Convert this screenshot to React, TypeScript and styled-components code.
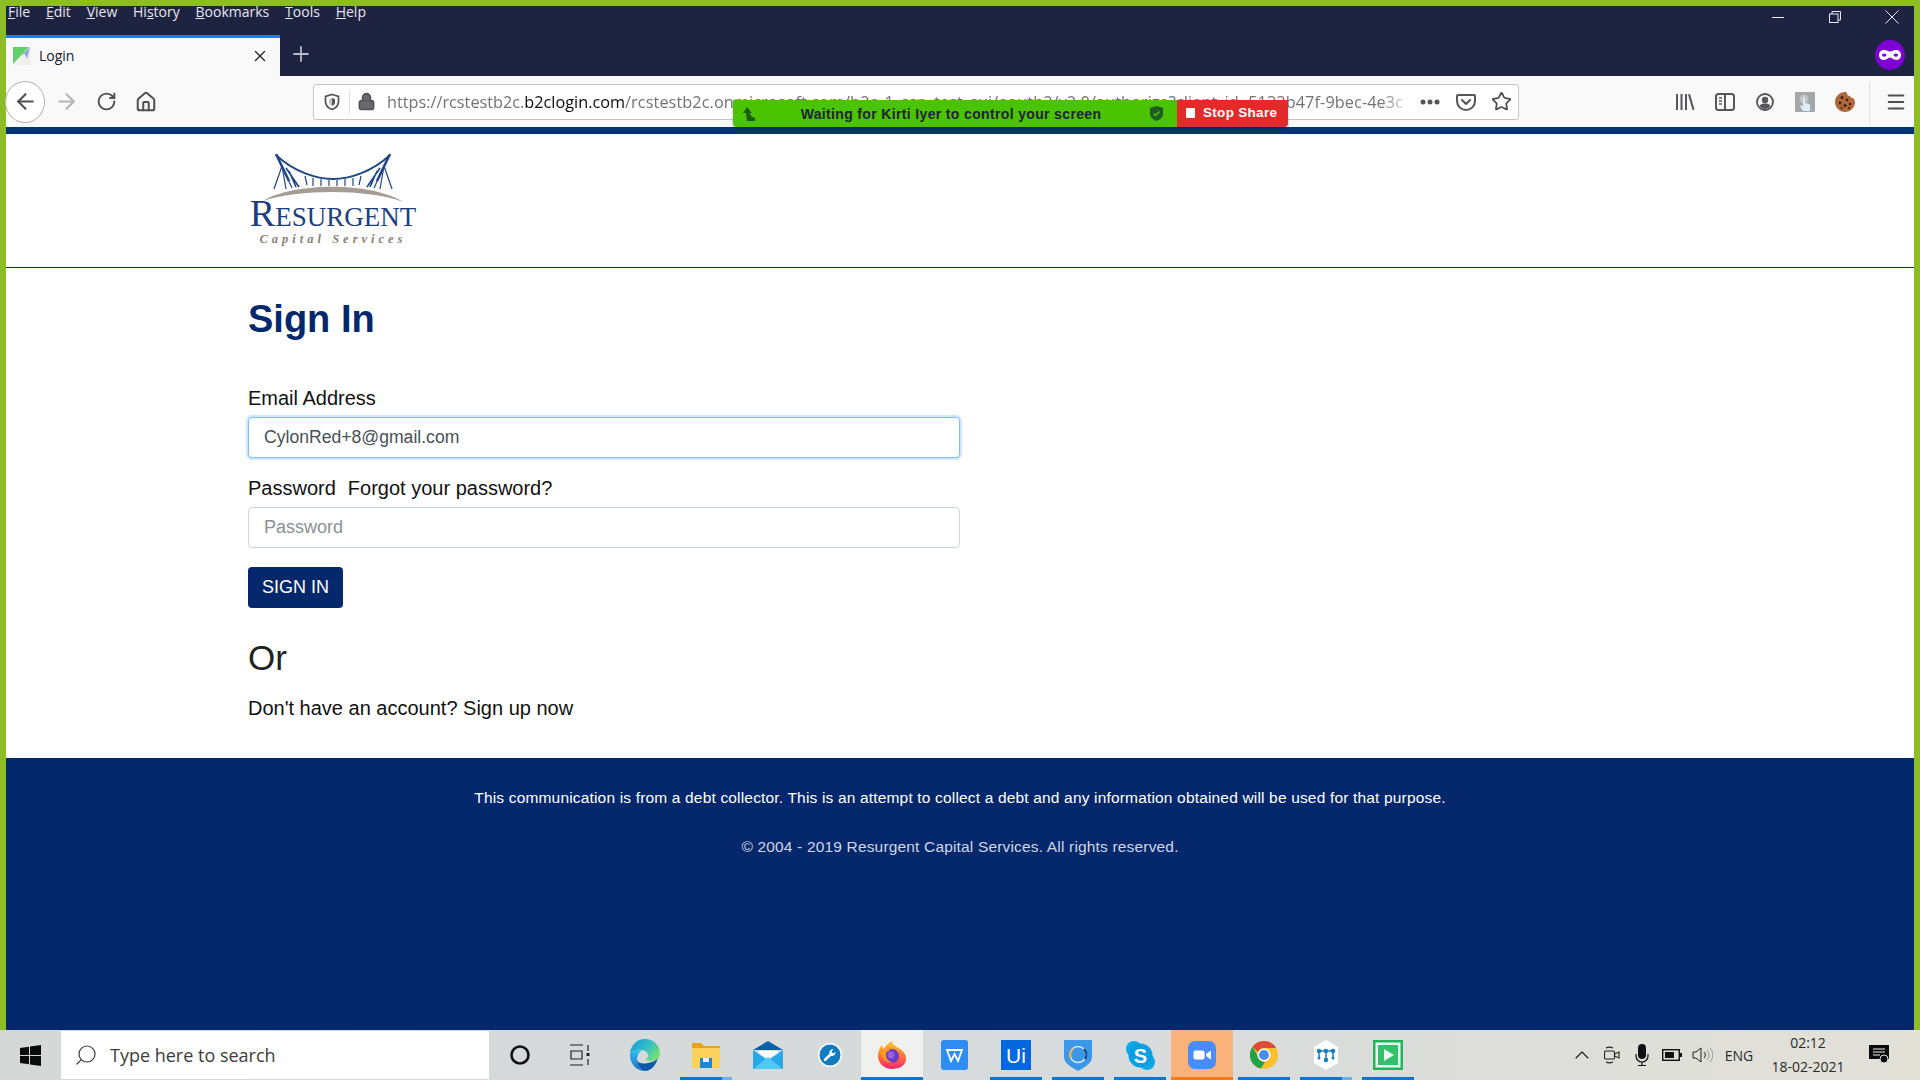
import styled, { createGlobalStyle } from 'styled-components';
import {
  ArrowLeft,
  ArrowRight,
  RotateCw,
  House,
  Lock,
  Star,
  X,
  Plus,
  Search,
  ChevronUp,
  Menu,
} from 'lucide-react';
import type { ReactNode } from 'react';

const GlobalStyle = createGlobalStyle`
  html, body { margin: 0; padding: 0; height: 100%; overflow: hidden; }
  body { font-family: "Liberation Sans", Arial, sans-serif; background: #fff; }
  * { box-sizing: border-box; }
`;

const Screen = styled.div`
  position: relative;
  width: 1920px;
  height: 1080px;
  display: flex;
  flex-direction: column;
`;

const Framed = styled.div`
  height: 1030px;
  border: solid #8cbd24;
  border-width: 6px 6px 0;
  display: flex;
  flex-direction: column;
`;

/* browser chrome */
const TitleRow = styled.div`
  height: 28px;
  background: #1f2342;
  display: flex;
  justify-content: space-between;
`;

const MenuBar = styled.div`
  display: flex;
  gap: 15.8px;
  padding-left: 2px;
  height: 13px;
  align-items: center;
  margin-top: -1px;
  font: 14px/20px 'Open Sans', sans-serif;
  color: #e4e6ee;
`;

const WindowButtons = styled.div`
  display: flex;
  gap: 13px;
  color: #e8e8ee;
`;

const WindowButton = styled.div`
  width: 44px;
  height: 22px;
  display: flex;
  align-items: center;
  justify-content: center;
`;

const TabRow = styled.div`
  height: 42px;
  background: #1f2342;
  display: flex;
  align-items: flex-end;
`;

const Tab = styled.div`
  width: 274px;
  height: 41px;
  background: #f9f9fa;
  border-top: 3px solid #0a84ff;
  display: flex;
  align-items: center;
  padding: 0 0 3px 7px;
  font: 14px 'Open Sans', sans-serif;
  color: #18181f;
`;

const TabTitle = styled.span`
  margin-left: 8px;
  flex: 1;
`;

const NewTab = styled.div`
  width: 42px;
  height: 41px;
  padding-bottom: 4px;
  display: flex;
  align-items: center;
  justify-content: center;
  color: #b9bac6;
`;

const Incognito = styled.div`
  width: 30px;
  height: 30px;
  border-radius: 50%;
  background: #7f00d4;
  margin: 0 9px 6px auto;
  display: flex;
  align-items: center;
  justify-content: center;
`;

const NavRow = styled.div`
  height: 51px;
  background: #f9f9fa;
  display: flex;
  align-items: center;
  color: #4f4f52;
`;

const Slot = styled.div<{ $w: number; $faded?: boolean }>`
  width: ${(p) => p.$w}px;
  height: 36px;
  flex: none;
  display: flex;
  align-items: center;
  justify-content: center;
  color: ${(p) => (p.$faded ? '#b5b5b8' : 'inherit')};
`;

const BackCircle = styled.div`
  width: 40px;
  height: 42px;
  flex: none;
  margin: 0 1px 0 -1px;
  border: 1px solid #b4b4b6;
  border-radius: 50%;
  background: #fff;
  display: flex;
  align-items: center;
  justify-content: center;
`;

const UrlBar = styled.div`
  width: 1206px;
  height: 36px;
  margin-left: 147px;
  flex: none;
  background: #fff;
  border: 1px solid #c4c4c6;
  border-radius: 3px;
  display: flex;
  align-items: center;
`;

const UrlDivider = styled.div`
  width: 1px;
  height: 24px;
  background: #e2e2e4;
`;

const UrlText = styled.div`
  flex: 1;
  min-width: 0;
  overflow: hidden;
  white-space: nowrap;
  margin-left: 5px;
  font: 16.25px 'Open Sans', sans-serif;
  color: #737377;
  -webkit-mask-image: linear-gradient(to right, #000 97%, transparent);
  mask-image: linear-gradient(to right, #000 97%, transparent);
`;

const UrlHost = styled.span`
  color: #0c0c0d;
`;

const UrlPath = styled.span`
  letter-spacing: 0.09px;
`;

const ToolGroup = styled.div`
  margin-left: 146px;
  display: flex;
  align-items: center;
`;

const ToolDivider = styled.div`
  width: 1px;
  height: 40px;
  margin: 0 8px 0 4px;
  background: #e0e0e2;
`;

const BrowserAccent = styled.div`
  height: 7px;
  background: #003575;
`;

/* zoom sharing strip */
const ShareBar = styled.div`
  position: absolute;
  left: 733px;
  top: 100px;
  width: 555px;
  height: 27px;
  display: flex;
  border-radius: 0 0 4px 4px;
  overflow: hidden;
  box-shadow: 0 1px 3px rgba(0, 0, 0, 0.3);
`;

const ShareStatus = styled.div`
  width: 444px;
  background: #4ac400;
  color: #22223a;
  display: flex;
  align-items: center;
  padding: 0 14px 0 9px;
  font: bold 14px 'Liberation Sans', sans-serif;
`;

const ShareText = styled.span`
  flex: 1;
  text-align: center;
  padding-right: 4px;
  letter-spacing: 0.35px;
`;

const StopShare = styled.div`
  flex: 1;
  background: #e22a2a;
  color: #fff;
  display: flex;
  align-items: center;
  gap: 8px;
  padding: 0 0 2px 9px;
  font: bold 13.5px 'Liberation Sans', sans-serif;
  letter-spacing: 0.3px;
`;

const StopSquare = styled.span`
  width: 9px;
  height: 10px;
  background: #fff;
  border-radius: 1px;
`;

/* login page */
const Page = styled.div`
  flex: 1;
  min-height: 0;
  display: flex;
  flex-direction: column;
  background: #fff;
`;

const Header = styled.header`
  height: 134px;
  padding: 20px 0 0 243px;
  border-bottom: 1px solid #04286b;
`;

const LogoBox = styled.div`
  width: 168px;
  display: flex;
  flex-direction: column;
  align-items: center;
`;

const LogoBridge = styled.svg`
  display: block;
  margin-bottom: -8px;
`;

const LogoName = styled.div`
  font: 38px/27px 'Liberation Serif', serif;
  font-variant: small-caps;
  color: #1d3f7d;
  white-space: nowrap;
`;

const LogoTag = styled.div`
  margin-top: 5px;
  font: italic bold 12.5px/14px 'Liberation Serif', serif;
  color: #8b8178;
  letter-spacing: 4px;
  white-space: nowrap;
`;

const Main = styled.main`
  flex: 1;
  padding: 29px 0 0 242px;
  color: #111;
`;

const Title = styled.h1`
  margin: 0 0 45px;
  font: bold 38px/44px 'Liberation Sans', sans-serif;
  color: #04286b;
`;

const Field = styled.div`
  width: 712px;
  margin-bottom: 18px;
`;

const Label = styled.div`
  display: flex;
  gap: 12px;
  font-size: 20px;
  line-height: 24px;
  margin-bottom: 7px;
  color: #111;
`;

const Input = styled.div<{ $focused?: boolean; $empty?: boolean }>`
  height: 41px;
  display: flex;
  align-items: center;
  padding: 0 15px;
  border-radius: 4px;
  background: #fff;
  font-size: ${(p) => (p.$empty ? '18px' : '17.6px')};
  border: 1px solid ${(p) => (p.$focused ? '#80bdff' : '#ced4da')};
  color: ${(p) => (p.$empty ? '#8a9097' : '#495057')};
  box-shadow: ${(p) => (p.$focused ? '0 0 0 2px rgba(0, 123, 255, 0.18)' : 'none')};
`;

const SubmitButton = styled.button`
  display: block;
  width: 95px;
  height: 41px;
  margin: 19px 0 30px;
  padding: 0;
  border: 0;
  border-radius: 4px;
  background: #04286b;
  color: #fff;
  font: 18px 'Liberation Sans', sans-serif;
`;

const OrHeading = styled.h2`
  margin: 0 0 18px;
  font: 400 35px/40px 'Liberation Sans', sans-serif;
  color: #222;
`;

const SignUpLine = styled.div`
  font-size: 20px;
  line-height: 24px;
`;

const Footer = styled.footer`
  height: 272px;
  background: #04286b;
  padding-top: 30px;
  text-align: center;
  font-size: 15.5px;
  letter-spacing: 0.17px;
`;

const Notice = styled.p`
  margin: 0 0 30px;
  line-height: 20px;
  color: #fff;
`;

const Copyright = styled.p`
  margin: 0;
  line-height: 18px;
  color: #cfd6e6;
`;

/* windows taskbar */
const Taskbar = styled.div`
  height: 50px;
  display: flex;
  align-items: stretch;
  background: linear-gradient(to right, #d5d8d7, #d8dbdc 60%, #e2e1d8);
  color: #1b1b1b;
`;

const StartButton = styled.div`
  width: 61px;
  display: flex;
  align-items: center;
  justify-content: center;
`;

const SearchBox = styled.div`
  width: 428px;
  margin: 1px 0;
  background: #fff;
  display: flex;
  align-items: center;
  gap: 12px;
  padding-left: 13px;
  font: 18px 'Open Sans', sans-serif;
  color: #3c3c3c;
`;

const MirroredSearch = styled(Search)`
  transform: scaleX(-1);
`;

const TaskSlots = styled.div`
  display: grid;
  grid-template-columns: repeat(15, 62px);
`;

const TaskSlot = styled.div<{ $mark?: 'open' | 'multi' | 'active' | 'alert' }>`
  position: relative;
  display: flex;
  align-items: center;
  justify-content: center;
  background: ${(p) =>
    p.$mark === 'active' ? '#f0f0ef' : p.$mark === 'alert' ? '#f8b27a' : 'transparent'};

  &::after {
    content: '';
    display: ${(p) => (p.$mark ? 'block' : 'none')};
    position: absolute;
    bottom: 0;
    height: 3px;
    left: ${(p) => (p.$mark === 'active' || p.$mark === 'alert' ? 0 : '5px')};
    right: ${(p) => (p.$mark === 'active' || p.$mark === 'alert' ? 0 : '5px')};
    background: ${(p) =>
      p.$mark === 'alert'
        ? '#ff7a14'
        : p.$mark === 'multi'
          ? 'linear-gradient(to right, #0078d7 80%, #6cb2ea 80%)'
          : '#0078d7'};
  }
`;

const Tray = styled.div`
  margin-left: auto;
  padding-right: 17px;
  display: flex;
  align-items: center;
`;

const TrayItem = styled.div<{ $w: number }>`
  width: ${(p) => p.$w}px;
  display: flex;
  align-items: center;
  justify-content: center;
`;

const Lang = styled.span`
  font: 14px 'Open Sans', sans-serif;
  color: #2a2a2a;
`;

const Clock = styled.div`
  text-align: center;
  font: 14px/24px 'Open Sans', sans-serif;
  color: #2a2a2a;
`;

const menuItems: ReactNode[] = [
  <><u>F</u>ile</>,
  <><u>E</u>dit</>,
  <><u>V</u>iew</>,
  <>Hi<u>s</u>tory</>,
  <><u>B</u>ookmarks</>,
  <><u>T</u>ools</>,
  <><u>H</u>elp</>,
];

function Favicon() {
  return (
    <svg width="18" height="18" viewBox="0 0 18 18">
      <rect width="18" height="18" fill="#f1f0ec" />
      <path d="M0 0h16L0 17z" fill="#5fd168" />
      <path d="M9 8l8-8-3 12-2-5z" fill="#8f9ede" />
    </svg>
  );
}

function Mask() {
  return (
    <svg width="22" height="12" viewBox="0 0 22 12">
      <path
        fillRule="evenodd"
        fill="#fff"
        d="M5 1c3 0 4 1.500 6 1.500S14 1 17 1c3 0 5 2 5 5s-2 5-5 5c-3 0-4-2.500-6-2.500S8 11 5 11C2 11 0 9 0 6s2-5 5-5zM5 4.500a2 1.600 0 100 3.200 2.500 1.600 0 000-3.200zM17 4.500a2.500 1.600 0 100 3.200 2 1.600 0 000-3.200z"
      />
    </svg>
  );
}

function TrackingShield() {
  return (
    <svg width="18" height="18" viewBox="0 0 18 18" fill="none">
      <path d="M9 1.500l6.500 2v5c0 4-2.500 6.500-6.500 8-4-1.500-6.500-4-6.500-8v-5z" stroke="#55555a" strokeWidth="1.800" />
      <path d="M9 5l3 1v3c0 2-1 3-3 4z" fill="#55555a" />
      <path d="M9 5L6 6v3c0 2 1 3 3 4z" fill="#55555a" opacity=".35" />
    </svg>
  );
}

function Pocket() {
  return (
    <svg width="20" height="18" viewBox="0 0 20 18" fill="none" stroke="#55555a" strokeWidth="2">
      <path d="M2 2h16a1 1 0 011 1v5c0 5-4 9-9 9s-9-4-9-9V3a1 1 0 011-1z" />
      <path d="M6 7l4 4 4-4" strokeLinecap="round" strokeLinejoin="round" />
    </svg>
  );
}

function Library() {
  return (
    <svg width="20" height="18" viewBox="0 0 20 18" fill="#55555a">
      <rect x="1" y="1" width="2" height="16" />
      <rect x="5.500" y="1" width="2" height="16" />
      <rect x="10" y="1" width="2" height="16" />
      <path d="M13 1.500l2-.5 4.500 15.500-2 .5z" />
    </svg>
  );
}

function Sidebar() {
  return (
    <svg width="20" height="18" viewBox="0 0 20 18" fill="none" stroke="#55555a" strokeWidth="2">
      <rect x="1" y="1" width="18" height="16" rx="2.500" />
      <path d="M10 1v16" />
      <path d="M4 5h3M4 8h3M4 11h3" strokeWidth="1.300" />
    </svg>
  );
}

function Account() {
  return (
    <svg width="18" height="18" viewBox="0 0 18 18" fill="none">
      <circle cx="9" cy="9" r="8" stroke="#55555a" strokeWidth="1.800" />
      <circle cx="9" cy="7" r="3.200" fill="#55555a" />
      <path d="M3.500 13c1-2 3-2.500 5.500-2.500s4.500.5 5.500 2.500c-1.500 2-3.500 3-5.500 3s-4-1-5.500-3z" fill="#55555a" />
    </svg>
  );
}

function TouchExtension() {
  return (
    <svg width="20" height="20" viewBox="0 0 20 20">
      <rect width="20" height="20" rx="1" fill="#a5a6a8" />
      <circle cx="9" cy="7" r="4.500" fill="#c2c3c5" />
      <path d="M8 6a1 1 0 012 0v5l5 1.500V19H8l-3-5 1-1 2 1.500z" fill="#dcefFb" />
    </svg>
  );
}

function Cookie() {
  return (
    <svg width="20" height="20" viewBox="0 0 20 20">
      <path d="M10 0c1 0 1.500.5 2 1 0 2 1 3 3 3 .5 1.500 1.500 2 3 2 1 1 2 2.500 2 4 0 5.500-4.500 10-10 10S0 15.500 0 10 4.500 0 10 0z" fill="#b0683a" />
      <g fill="#3a2012">
        <circle cx="7" cy="5.500" r="1.500" />
        <circle cx="12" cy="8" r="1.300" />
        <circle cx="5" cy="11" r="1.400" />
        <circle cx="10" cy="13.500" r="1.500" />
        <circle cx="15" cy="12" r="1.200" />
        <circle cx="6.500" cy="16" r="1" />
        <circle cx="14" cy="16" r="1" />
      </g>
    </svg>
  );
}

function MinimizeIcon() {
  return (
    <svg width="12" height="12" viewBox="0 0 12 12" fill="none" stroke="#e8e8ee">
      <path d="M0 6.500h12" />
    </svg>
  );
}

function RestoreIcon() {
  return (
    <svg width="12" height="12" viewBox="0 0 12 12" fill="none" stroke="#e8e8ee">
      <rect x=".5" y="3" width="8.500" height="8.500" />
      <path d="M3 3V.5h8.500V9H9" />
    </svg>
  );
}

function CloseIcon() {
  return (
    <svg width="14" height="14" viewBox="0 0 14 14" fill="none" stroke="#e8e8ee">
      <path d="M.5.500l13 13M13.500.500l-13 13" />
    </svg>
  );
}

function BridgeLogo() {
  return (
    <LogoBridge width="168" height="54" viewBox="0 0 168 54" fill="none">
      <g stroke="#1f4584" strokeWidth="1.200">
        <path d="M27 0L40 27M141 0l-13 27" strokeWidth="2.500" />
        <path d="M33 12L25 35M33 12l4 23M33 12l10 22M135 12l8 23M135 12l-4 23M135 12l-10 22" />
        <path d="M37 14l13 19M40 17l7 16M131 14l-13 19M128 17l-7 16" strokeWidth="1.600" />
        <path d="M27 1C45 18 68 25 84 25s39-7 57-24" strokeWidth="1.800" />
        <path d="M56 22l2 9M64 24v8M72 25v7M80 26v6M88 26v6M96 25v7M104 24v8M112 22l-2 9" />
      </g>
      <path d="M14 47C45 28 123 28 154 48 120 35 50 35 14 47z" fill="#a59c93" />
    </LogoBridge>
  );
}

function WindowsLogo() {
  return (
    <svg width="21" height="21" viewBox="0 0 21 21" fill="#0c0c0c">
      <path d="M0 3l9-1.300V10H0zM10 1.500L21 0v10H10zM0 11h9v8.300L0 18zM10 11h11v10l-11-1.500z" />
    </svg>
  );
}

function TaskView() {
  return (
    <svg width="24" height="24" viewBox="0 0 24 24" fill="none" stroke="#222" strokeWidth="1.200">
      <path d="M0 2h13M0 22h13M1 8h11v8H1z" />
      <path d="M18 2v6M18 16v6" />
      <rect x="16.500" y="10" width="3" height="3" fill="#222" stroke="none" />
    </svg>
  );
}

function EdgeIcon() {
  return (
    <svg width="31" height="32" viewBox="0 0 31 32">
      <defs>
        <linearGradient id="edgeTop" x1="0" y1="0" x2="1" y2=".6">
          <stop offset="0" stopColor="#1696d8" />
          <stop offset=".6" stopColor="#35c1c4" />
          <stop offset="1" stopColor="#74de72" />
        </linearGradient>
        <linearGradient id="edgeLow" x1="0" y1="0" x2="0" y2="1">
          <stop offset="0" stopColor="#35c1f1" />
          <stop offset="1" stopColor="#1472c9" />
        </linearGradient>
      </defs>
      <path d="M1 14C2 6 8 0 16 0c9 0 15 7 15 14 0 5-4 8-9 8-3 0-5-1-5-2 2-1 3-3 2-5-2-4-7-5-11-4-3 1-6 2-7 3z" fill="url(#edgeTop)" />
      <path d="M1 14c4-4 9-4 12-3-3 2-5 6-5 10 0 5 3 9 8 11C7 32 0 24 1 14z" fill="url(#edgeLow)" />
      <path d="M8 21c2 4 6 4 11 3 4-1 8-2 10-5-2 7-7 13-13 13-5-2-8-6-8-11z" fill="#0d5aa8" />
    </svg>
  );
}

function ExplorerIcon() {
  return (
    <svg width="30" height="28" viewBox="0 0 30 28">
      <path d="M1 2h9l3 3h16v3H1z" fill="#e8a317" />
      <rect x="1" y="7" width="28" height="20" fill="#fdd25a" />
      <rect x="9" y="17" width="12" height="10" fill="#1c88d4" />
      <rect x="12" y="17" width="6" height="4" fill="#e8f3fb" />
    </svg>
  );
}

function MailIcon() {
  return (
    <svg width="30" height="28" viewBox="0 0 30 28">
      <path d="M0 9L15 0l15 9z" fill="#0b5ea8" />
      <path d="M5 10h20v8H5z" fill="#fff" />
      <path d="M0 9l15 10L30 9v19H0z" fill="#28a8ea" />
      <path d="M0 28l15-12 15 12z" fill="#50c8f5" />
    </svg>
  );
}

function WrenchIcon() {
  return (
    <svg width="24" height="24" viewBox="0 0 24 24">
      <circle cx="12" cy="12" r="12" fill="#fff" />
      <circle cx="12" cy="12" r="10.500" fill="#0f7bc0" />
      <path d="M5.500 16.500l6-6c-.5-2 1-4.500 4-4.500l-2 2.500 1.500 2 2.500-1.500c.2 2.500-2 4.500-4.500 4l-6 5.500z" fill="#fff" />
    </svg>
  );
}

function FirefoxIcon() {
  return (
    <svg width="28" height="30" viewBox="0 0 28 30">
      <defs>
        <linearGradient id="foxBody" x1="0" y1="0" x2="0" y2="1">
          <stop offset="0" stopColor="#ffcb2f" />
          <stop offset=".5" stopColor="#ff7a2b" />
          <stop offset="1" stopColor="#f0267a" />
        </linearGradient>
      </defs>
      <path d="M14 29C6 29 0 23 0 16 0 11 2 7 4 5c0 2 1 3 2 4 1-3 4-6 8-8 0 3 2 4 5 6 5 3 9 6 9 12 0 6-6 10-14 10z" fill="url(#foxBody)" />
      <circle cx="14" cy="16" r="7" fill="#6b3bc4" />
      <circle cx="13" cy="15" r="3.500" fill="#9a5fe0" />
      <path d="M3 11c3-2 7-2 9 0-3 0-4 1-4 4 0 4 3 7 7 7-6 2-11-2-12-11z" fill="#ff9a1f" />
    </svg>
  );
}

function WpsIcon() {
  return (
    <svg width="27" height="30" viewBox="0 0 27 30">
      <rect width="27" height="30" rx="3" fill="#2f8cf2" />
      <path d="M6 10h15l-4 11-3.500-7-3.500 7z" fill="none" stroke="#fff" strokeWidth="1.800" />
    </svg>
  );
}

function UiPathIcon() {
  return (
    <svg width="30" height="30" viewBox="0 0 30 30">
      <rect width="30" height="30" fill="#0067df" />
      <text x="15" y="23" textAnchor="middle" fontFamily="Liberation Sans" fontSize="21" fill="#fff">Ui</text>
    </svg>
  );
}

function HotspotIcon() {
  return (
    <svg width="28" height="31" viewBox="0 0 28 31" fill="none">
      <path d="M0 0h28v17c0 6-7 10-14 14C7 27 0 23 0 17z" fill="#3c97e8" />
      <circle cx="14" cy="14.500" r="8" stroke="#d6eefb" strokeWidth="1.400" />
      <path d="M7 18a8 8 0 012-9" stroke="#f3b13c" strokeWidth="2" />
      <path d="M20 9a8 8 0 011 10" stroke="#103f75" strokeWidth="2" />
    </svg>
  );
}

function SkypeIcon() {
  return (
    <svg width="29" height="29" viewBox="0 0 29 29">
      <circle cx="8" cy="8" r="8" fill="#0fa7e8" />
      <circle cx="21" cy="21" r="8" fill="#0fa7e8" />
      <circle cx="14.500" cy="14.500" r="12" fill="#0a9fe2" />
      <text x="14.500" y="21.500" textAnchor="middle" fontFamily="Liberation Sans" fontWeight="bold" fontSize="20" fill="#fff">S</text>
    </svg>
  );
}

function ZoomIcon() {
  return (
    <svg width="28" height="28" viewBox="0 0 28 28">
      <rect width="28" height="28" rx="7" fill="#4a8cff" />
      <rect x="5.500" y="9.500" width="11" height="9" rx="2" fill="#fff" />
      <path d="M18 13l5-3.500v9L18 15z" fill="#fff" />
    </svg>
  );
}

function ChromeIcon() {
  return (
    <svg width="28" height="28" viewBox="0 0 28 28">
      <circle cx="14" cy="14" r="14" fill="#fbc02d" />
      <path d="M14 0a14 14 0 0112.100 7H14a7 7 0 00-6.300 4L2.500 5.800A14 14 0 0114 0z" fill="#df4a38" />
      <path d="M2.500 5.800l5.600 9.700a7 7 0 006.900 5.400L10.800 27.600A14 14 0 012.500 5.800z" fill="#22a34a" />
      <circle cx="14" cy="14" r="6.500" fill="#fff" />
      <circle cx="14" cy="14" r="5" fill="#4a8cf0" />
    </svg>
  );
}

function FlowHexIcon() {
  return (
    <svg width="28" height="30" viewBox="0 0 28 30">
      <path d="M14 0l12 7v16l-12 7-12-7V7z" fill="#fff" />
      <g stroke="#1b7ec2" strokeWidth="1.500">
        <path d="M7 11h14M14 11v9M7 11v7M21 11v7" />
      </g>
      <g fill="#1b7ec2">
        <circle cx="7" cy="11" r="2.300" />
        <circle cx="14" cy="11" r="2.300" />
        <circle cx="21" cy="11" r="2.300" />
        <circle cx="14" cy="20" r="2.300" />
        <circle cx="7" cy="18" r="1.500" />
        <circle cx="21" cy="18" r="1.500" />
      </g>
    </svg>
  );
}

function PlayerIcon() {
  return (
    <svg width="30" height="30" viewBox="0 0 30 30">
      <rect width="30" height="30" fill="#21b45a" />
      <rect x="2.500" y="2.500" width="25" height="25" fill="#eafaf0" />
      <rect x="5" y="5" width="20" height="20" fill="#33c06a" />
      <path d="M11 9l10 6-10 6z" fill="#eafaf0" />
    </svg>
  );
}

function TrayCamera() {
  return (
    <svg width="16" height="20" viewBox="0 0 16 20" fill="none" stroke="#222" strokeWidth="1.100">
      <rect x=".5" y="6" width="10" height="8" rx="1" />
      <path d="M10.500 9l4.500-2v6l-4.500-2zM2 3a6 4 0 017 0M2 17a6 4 0 007 0" />
    </svg>
  );
}

function TrayMic() {
  return (
    <svg width="14" height="22" viewBox="0 0 14 22" fill="none" stroke="#111" strokeWidth="1.200">
      <rect x="3" y="0" width="8" height="15" rx="4" fill="#111" stroke="none" />
      <path d="M1 10v2a6 6 0 0012 0v-2M7 18v3M3 21.500h8" />
    </svg>
  );
}

function TrayBattery() {
  return (
    <svg width="20" height="12" viewBox="0 0 20 12">
      <rect x=".7" y=".7" width="16.600" height="10.600" fill="none" stroke="#111" strokeWidth="1.400" />
      <rect x="3" y="3" width="9" height="6" fill="#111" />
      <rect x="18" y="4" width="2" height="4" fill="#111" />
    </svg>
  );
}

function TraySpeaker() {
  return (
    <svg width="21" height="18" viewBox="0 0 21 18" fill="none" stroke="#222" strokeWidth="1">
      <path d="M1 6h3l5-4v14l-5-4H1z" />
      <path d="M12 6a4 4 0 010 6" />
      <path d="M15 4a7 7 0 010 10M18 2a10 10 0 010 14" stroke="#9a9a9a" />
    </svg>
  );
}

function ActionCenter() {
  return (
    <svg width="21" height="20" viewBox="0 0 21 20">
      <path d="M0 0h20v14h-4l-4 4v-4H0z" fill="#0c0c0c" />
      <path d="M4 4h12M4 7h12M4 10h7" stroke="#eee" strokeWidth="1" />
      <circle cx="15" cy="14" r="4" fill="#0c0c0c" stroke="#ddd" />
    </svg>
  );
}

export default function App() {
  return (
    <Screen>
      <GlobalStyle />
      <Framed>
        <TitleRow>
          <MenuBar>
            {menuItems.map((item, i) => (
              <span key={i}>{item}</span>
            ))}
          </MenuBar>
          <WindowButtons>
            <WindowButton>
              <MinimizeIcon />
            </WindowButton>
            <WindowButton>
              <RestoreIcon />
            </WindowButton>
            <WindowButton>
              <CloseIcon />
            </WindowButton>
          </WindowButtons>
        </TitleRow>

        <TabRow>
          <Tab>
            <Favicon />
            <TabTitle>Login</TabTitle>
            <Slot $w={40}>
              <X size={18} strokeWidth={1.8} color="#26262c" />
            </Slot>
          </Tab>
          <NewTab>
            <Plus size={24} strokeWidth={1.8} />
          </NewTab>
          <Incognito>
            <Mask />
          </Incognito>
        </TabRow>

        <NavRow>
          <BackCircle>
            <ArrowLeft size={25} strokeWidth={2} />
          </BackCircle>
          <Slot $w={40} $faded>
            <ArrowRight size={25} strokeWidth={2} />
          </Slot>
          <Slot $w={40}>
            <RotateCw size={21} strokeWidth={2.2} />
          </Slot>
          <Slot $w={40}>
            <House size={22} strokeWidth={2.2} />
          </Slot>
          <UrlBar>
            <Slot $w={35}>
              <TrackingShield />
            </Slot>
            <UrlDivider />
            <Slot $w={32}>
              <Lock size={19} strokeWidth={2} fill="#6a6a6e" />
            </Slot>
            <UrlText>
              https://rcstestb2c.<UrlHost>b2clogin.com</UrlHost>
              <UrlPath>
                /rcstestb2c.onmicrosoft.com/b2c_1_ssp_test_sui/oauth2/v2.0/authorize?client_id=5133b47f-9bec-4e3c
              </UrlPath>
            </UrlText>
            <Slot $w={36}>
              <svg width="20" height="6" viewBox="0 0 20 6" fill="#55555a">
                <circle cx="3" cy="3" r="2.500" />
                <circle cx="10" cy="3" r="2.500" />
                <circle cx="17" cy="3" r="2.500" />
              </svg>
            </Slot>
            <Slot $w={36}>
              <Pocket />
            </Slot>
            <Slot $w={34}>
              <Star size={21} strokeWidth={2} />
            </Slot>
          </UrlBar>
          <ToolGroup>
            <Slot $w={40}>
              <Library />
            </Slot>
            <Slot $w={40}>
              <Sidebar />
            </Slot>
            <Slot $w={40}>
              <Account />
            </Slot>
            <Slot $w={40}>
              <TouchExtension />
            </Slot>
            <Slot $w={40}>
              <Cookie />
            </Slot>
            <ToolDivider />
            <Slot $w={36}>
              <Menu size={22} strokeWidth={2.2} />
            </Slot>
          </ToolGroup>
        </NavRow>
        <BrowserAccent />

        <Page>
          <Header>
            <LogoBox>
              <BridgeLogo />
              <LogoName>Resurgent</LogoName>
              <LogoTag>Capital Services</LogoTag>
            </LogoBox>
          </Header>
          <Main>
            <Title>Sign In</Title>
            <Field>
              <Label>Email Address</Label>
              <Input $focused>CylonRed+8@gmail.com</Input>
            </Field>
            <Field>
              <Label>
                <span>Password</span>
                <span>Forgot your password?</span>
              </Label>
              <Input $empty>Password</Input>
            </Field>
            <SubmitButton>SIGN IN</SubmitButton>
            <OrHeading>Or</OrHeading>
            <SignUpLine>Don't have an account? Sign up now</SignUpLine>
          </Main>
          <Footer>
            <Notice>
              This communication is from a debt collector. This is an attempt to collect a debt and any
              information obtained will be used for that purpose.
            </Notice>
            <Copyright>© 2004 - 2019 Resurgent Capital Services. All rights reserved.</Copyright>
          </Footer>
        </Page>
      </Framed>

      <ShareBar>
        <ShareStatus>
          <svg width="14" height="14" viewBox="0 0 14 14" fill="#1d5c14">
            <path d="M5 0l5 6H8l1 3 4 2v3H5L4 6H1z" />
          </svg>
          <ShareText>Waiting for Kirti Iyer to control your screen</ShareText>
          <svg width="13" height="15" viewBox="0 0 13 15">
            <path d="M6.500 0L13 2v6c0 3-3 5.500-6.500 7C3 13.500 0 11 0 8V2z" fill="#1f5c22" />
            <path d="M3.500 7.500l2 2 4-4" stroke="#4ac400" strokeWidth="1.500" fill="none" />
          </svg>
        </ShareStatus>
        <StopShare>
          <StopSquare />
          Stop Share
        </StopShare>
      </ShareBar>

      <Taskbar>
        <StartButton>
          <WindowsLogo />
        </StartButton>
        <SearchBox>
          <MirroredSearch size={24} strokeWidth={1.2} />
          Type here to search
        </SearchBox>
        <TaskSlots>
          <TaskSlot>
            <svg width="22" height="22" viewBox="0 0 22 22" fill="none">
              <circle cx="11" cy="11" r="8.500" stroke="#111" strokeWidth="2.600" />
            </svg>
          </TaskSlot>
          <TaskSlot>
            <TaskView />
          </TaskSlot>
          <TaskSlot>
            <EdgeIcon />
          </TaskSlot>
          <TaskSlot $mark="multi">
            <ExplorerIcon />
          </TaskSlot>
          <TaskSlot>
            <MailIcon />
          </TaskSlot>
          <TaskSlot>
            <WrenchIcon />
          </TaskSlot>
          <TaskSlot $mark="active">
            <FirefoxIcon />
          </TaskSlot>
          <TaskSlot>
            <WpsIcon />
          </TaskSlot>
          <TaskSlot $mark="open">
            <UiPathIcon />
          </TaskSlot>
          <TaskSlot $mark="open">
            <HotspotIcon />
          </TaskSlot>
          <TaskSlot $mark="open">
            <SkypeIcon />
          </TaskSlot>
          <TaskSlot $mark="alert">
            <ZoomIcon />
          </TaskSlot>
          <TaskSlot $mark="open">
            <ChromeIcon />
          </TaskSlot>
          <TaskSlot $mark="multi">
            <FlowHexIcon />
          </TaskSlot>
          <TaskSlot $mark="open">
            <PlayerIcon />
          </TaskSlot>
        </TaskSlots>
        <Tray>
          <TrayItem $w={30}>
            <ChevronUp size={24} strokeWidth={1.1} />
          </TrayItem>
          <TrayItem $w={30}>
            <TrayCamera />
          </TrayItem>
          <TrayItem $w={30}>
            <TrayMic />
          </TrayItem>
          <TrayItem $w={30}>
            <TrayBattery />
          </TrayItem>
          <TrayItem $w={30}>
            <TraySpeaker />
          </TrayItem>
          <TrayItem $w={44}>
            <Lang>ENG</Lang>
          </TrayItem>
          <TrayItem $w={94}>
            <Clock>
              02:12
              <br />
              18-02-2021
            </Clock>
          </TrayItem>
          <TrayItem $w={48}>
            <ActionCenter />
          </TrayItem>
        </Tray>
      </Taskbar>
    </Screen>
  );
}
